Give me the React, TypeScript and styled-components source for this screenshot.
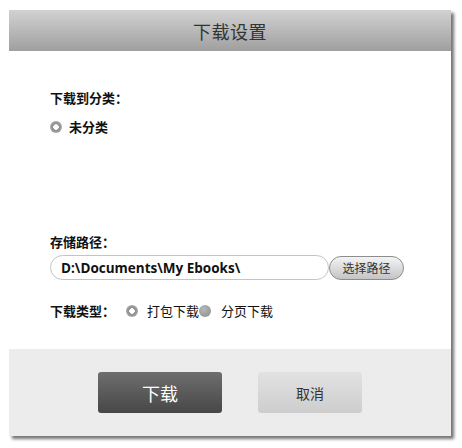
import React from "react";
import styled, { createGlobalStyle } from "styled-components";

const Global = createGlobalStyle`
  html, body { margin: 0; padding: 0; background: #fff; }
  body { font-family: "Noto Sans CJK SC", "Noto Sans", sans-serif; color: #222; }
`;

const Page = styled.div`
  width: 462px;
  height: 448px;
  padding: 10px 0 0 9px;
  box-sizing: border-box;
`;

const Dialog = styled.div`
  width: 442px;
  height: 426px;
  display: flex;
  flex-direction: column;
  box-shadow: 3px 3px 3px rgba(0, 0, 0, 0.55);
  background: #fff;
`;

const Header = styled.div`
  height: 41px;
  flex: none;
  background: linear-gradient(#d2d2d2, #9f9f9f);
  display: flex;
  align-items: center;
  justify-content: center;
  font-size: 18px;
  color: #333;
  letter-spacing: 0.5px;
`;

const Body = styled.div`
  flex: 1;
  padding: 38px 0 0 41px;
  display: flex;
  flex-direction: column;
`;

const Label = styled.div<{ $mt?: number }>`
  font-size: 13px;
  font-weight: bold;
  color: #111;
  line-height: 18px;
  margin-top: ${(p) => p.$mt ?? 0}px;
`;

const RadioRow = styled.label<{ $mt?: number }>`
  display: flex;
  align-items: center;
  margin-top: ${(p) => p.$mt ?? 0}px;
  font-size: 13px;
  line-height: 18px;
`;

const Radio = styled.span<{ $filled?: boolean; $ml?: number }>`
  width: 12px;
  height: 12px;
  border-radius: 50%;
  box-sizing: border-box;
  flex: none;
  margin-left: ${(p) => p.$ml ?? 0}px;
  ${(p) =>
    p.$filled
      ? `background: radial-gradient(circle at 40% 35%, #b8b8b8, #8a8a8a);`
      : `background: radial-gradient(circle, #fff 0 2.5px, #8c8c8c 3px, #a8a8a8 6px);`}
`;

const RadioText = styled.span<{ $bold?: boolean; $gap: number }>`
  margin-left: ${(p) => p.$gap}px;
  font-weight: ${(p) => (p.$bold ? "bold" : "normal")};
  color: #111;
`;

const PathRow = styled.div`
  display: flex;
  align-items: center;
  margin-top: 4px;
`;

const PathInput = styled.div`
  width: 279px;
  height: 25px;
  box-sizing: border-box;
  border: 1px solid #c4c4c4;
  border-radius: 13px;
  display: flex;
  align-items: center;
  padding-left: 10px;
  font-family: "Open Sans", "Liberation Sans", sans-serif;
  font-weight: bold;
  font-size: 13.5px;
  color: #111;
`;

const SmallButton = styled.div`
  width: 75px;
  height: 24px;
  box-sizing: border-box;
  border: 1px solid #8d8d8d;
  border-radius: 12px;
  background: linear-gradient(#f4f4f4, #c4c4c4);
  display: flex;
  align-items: center;
  justify-content: center;
  font-size: 12px;
  color: #333;
`;

const TypeRow = styled.div`
  display: flex;
  align-items: center;
  margin-top: 21px;
  font-size: 13px;
`;

const Footer = styled.div`
  height: 87px;
  flex: none;
  background: #ececec;
  display: flex;
  align-items: flex-start;
  padding: 23px 0 0 89px;
  box-sizing: border-box;
  gap: 36px;
`;

const Button = styled.div<{ $primary?: boolean }>`
  width: ${(p) => (p.$primary ? 124 : 104)}px;
  height: 41px;
  border-radius: 3px;
  display: flex;
  align-items: center;
  justify-content: center;
  background: ${(p) =>
    p.$primary
      ? "linear-gradient(#6e6e6e, #474747)"
      : "linear-gradient(#e2e2e2, #cdcdcd)"};
  color: ${(p) => (p.$primary ? "#fff" : "#333")};
  font-size: ${(p) => (p.$primary ? 18 : 14)}px;
`;

export default function App() {
  return (
    <Page>
      <Global />
      <Dialog>
        <Header>下载设置</Header>
        <Body>
          <Label>下载到分类：</Label>
          <RadioRow $mt={11}>
            <Radio />
            <RadioText $bold $gap={7}>未分类</RadioText>
          </RadioRow>
          <Label $mt={97}>存储路径：</Label>
          <PathRow>
            <PathInput>D:\Documents\My Ebooks\</PathInput>
            <SmallButton>选择路径</SmallButton>
          </PathRow>
          <TypeRow>
            <Label>下载类型：</Label>
            <Radio $ml={11} />
            <RadioText $gap={9}>打包下载</RadioText>
            <Radio $filled />
            <RadioText $gap={10}>分页下载</RadioText>
          </TypeRow>
        </Body>
        <Footer>
          <Button $primary>下载</Button>
          <Button>取消</Button>
        </Footer>
      </Dialog>
    </Page>
  );
}
